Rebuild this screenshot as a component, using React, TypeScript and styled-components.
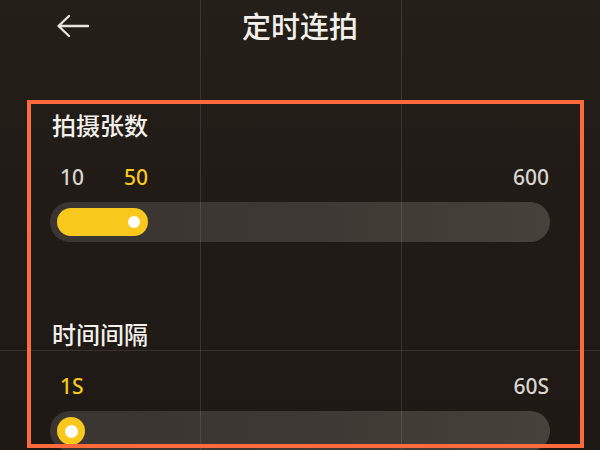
import React from 'react';
import styled, { createGlobalStyle } from 'styled-components';

const GlobalStyle = createGlobalStyle`
  html, body {
    margin: 0;
    padding: 0;
    background: #211b17;
  }
  * {
    box-sizing: border-box;
  }
`;

const Screen = styled.div`
  position: relative;
  width: 600px;
  height: 450px;
  overflow: hidden;
  background: linear-gradient(180deg, #251f1a 0%, #211b17 45%, #1f1915 100%);
  font-family: 'Noto Sans', 'Noto Sans CJK SC', sans-serif;
  color: #f3f0eb;
`;

const Header = styled.header`
  position: relative;
  height: 52px;
  display: flex;
  align-items: center;
  justify-content: center;
`;

const BackButton = styled.button`
  position: absolute;
  left: 56px;
  top: 14px;
  padding: 0;
  border: none;
  background: none;
  display: flex;
  cursor: pointer;
`;

const Title = styled.h1`
  margin: 0;
  font-size: 29px;
  line-height: 32px;
  font-weight: 500;
  padding-top: 2px;
`;

const Content = styled.main`
  padding: 62px 50px 0;
`;

const Section = styled.section`
  & + & {
    margin-top: 81px;
  }
`;

const Label = styled.h2`
  margin: 0;
  padding-left: 2px;
  font-size: 24px;
  line-height: 24px;
  font-weight: 500;
  color: #f3f0eb;
`;

const ValueRow = styled.div`
  margin-top: 27px;
  display: flex;
  align-items: center;
  gap: 40px;
  padding: 0 1px 0 10px;
  height: 24px;
  font-size: 21px;
`;

const Value = styled.span<{ $active?: boolean }>`
  color: ${(p) => (p.$active ? '#f8c81d' : '#d9d5cf')};
  font-weight: 500;
`;

const EndValue = styled(Value)`
  margin-left: auto;
`;

const Track = styled.div`
  margin-top: 13px;
  height: 40px;
  border-radius: 20px;
  padding: 6px 7px;
  background: linear-gradient(90deg, #3a3530 0%, #3d3833 50%, #47413b 100%);
  display: flex;
  align-items: center;
`;

const Fill = styled.div`
  height: 28px;
  border-radius: 14px;
  background: #f8c81d;
  display: flex;
  align-items: center;
  justify-content: flex-end;
  padding-right: 8px;
`;

const Dot = styled.span`
  width: 12px;
  height: 12px;
  border-radius: 50%;
  background: #ffffff;
`;

const Knob = styled.div`
  width: 28px;
  height: 28px;
  border-radius: 50%;
  background: #f8c81d;
  display: flex;
  align-items: center;
  justify-content: center;
`;

const KnobCenter = styled.span`
  width: 13px;
  height: 13px;
  border-radius: 50%;
  background: #ffffff;
`;

const GridLine = styled.div<{ $vertical?: boolean }>`
  position: absolute;
  pointer-events: none;
  background: rgba(255, 255, 255, 0.11);
  ${(p) =>
    p.$vertical
      ? 'top: 0; bottom: 0; width: 1px;'
      : 'left: 0; right: 0; height: 1px;'}
`;

const Highlight = styled.div`
  position: absolute;
  left: 27px;
  top: 100px;
  width: 557px;
  height: 348px;
  border: 4px solid #fd6a3c;
  pointer-events: none;
`;

const BackArrow = () => (
  <svg width="34" height="24" viewBox="0 0 34 24" fill="none">
    <path
      d="M32 12H3M13 2L2.5 12L13 22"
      stroke="#e6e2dc"
      strokeWidth="2.4"
      strokeLinecap="round"
      strokeLinejoin="round"
    />
  </svg>
);

export default function App() {
  return (
    <>
      <GlobalStyle />
      <Screen>
        <Header>
          <BackButton aria-label="返回">
            <BackArrow />
          </BackButton>
          <Title>定时连拍</Title>
        </Header>

        <Content>
          <Section>
            <Label>拍摄张数</Label>
            <ValueRow>
              <Value>10</Value>
              <Value $active>50</Value>
              <EndValue>600</EndValue>
            </ValueRow>
            <Track>
              <Fill style={{ width: 91 }}>
                <Dot />
              </Fill>
            </Track>
          </Section>

          <Section>
            <Label>时间间隔</Label>
            <ValueRow>
              <Value $active>1S</Value>
              <EndValue>60S</EndValue>
            </ValueRow>
            <Track>
              <Knob>
                <KnobCenter />
              </Knob>
            </Track>
          </Section>
        </Content>

        <GridLine $vertical style={{ left: 200 }} />
        <GridLine $vertical style={{ left: 401 }} />
        <GridLine style={{ top: 350 }} />
        <Highlight />
      </Screen>
    </>
  );
}
